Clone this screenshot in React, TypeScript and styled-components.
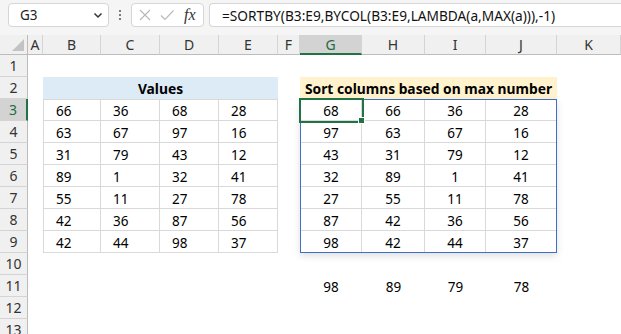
import styled, { createGlobalStyle } from "styled-components";

const GlobalStyle = createGlobalStyle`
  html, body {
    margin: 0;
    padding: 0;
    background: #ffffff;
    overflow: hidden;
  }
  body {
    font-family: "Noto Sans", "Open Sans", sans-serif;
    color: #000;
  }
`;

const Page = styled.div`
  width: 621px;
  height: 334px;
  overflow: hidden;
  background: #fff;
`;

/* ---------- formula bar ---------- */

const FormulaBar = styled.div`
  height: 35px;
  display: flex;
  align-items: flex-start;
  padding: 3px 0 0 8px;
  box-sizing: border-box;
  background: #f5f5f5;
`;

const Box = styled.div`
  height: 24px;
  box-sizing: border-box;
  background: #fff;
  border: 1px solid #d6d6d6;
  border-radius: 4px;
  display: flex;
  align-items: center;
`;

const NameBox = styled(Box)`
  width: 101px;
  justify-content: space-between;
  padding: 0 4px 0 11px;
  font-size: 13.5px;
  color: #222;
`;

const Dots = styled.div`
  width: 22px;
  height: 24px;
  display: flex;
  flex-direction: column;
  align-items: center;
  justify-content: center;
  gap: 2px;

  span {
    width: 2px;
    height: 2px;
    background: #555;
    border-radius: 1px;
  }
`;

const FxBox = styled(Box)`
  width: 73px;
  padding: 0 6px 0 5px;
  gap: 6px;
`;

const Fx = styled.span`
  font-family: "Liberation Serif", "DejaVu Serif", serif;
  font-style: italic;
  font-size: 16px;
  color: #333;
  margin-left: 3px;
`;

const FormulaInput = styled(Box)`
  flex: 1;
  margin-left: 5px;
  border-right: none;
  border-radius: 4px 0 0 4px;
  padding-left: 12px;
  font-size: 13.7px;
  color: #111;
  white-space: nowrap;
`;

/* ---------- sheet ---------- */

const Sheet = styled.div`
  display: grid;
  grid-template-columns: 28px 15px 58px 59px 59px 59px 22px 62px 63px 61px 71px 1fr;
  grid-template-rows: 20px repeat(13, 22px);
  font-size: 13.5px;
`;

const Corner = styled.div`
  background: #f0f0f0;
  border-right: 1px solid #bcbcbc;
  border-bottom: 1px solid #bcbcbc;
  position: relative;

  &::after {
    content: "";
    position: absolute;
    right: 3px;
    bottom: 3px;
    width: 0;
    height: 0;
    border-left: 12px solid transparent;
    border-bottom: 12px solid #c3c3c3;
  }
`;

const ColHead = styled.div<{ $active?: boolean }>`
  background: ${(p) => (p.$active ? "#d3d3d3" : "#f0f0f0")};
  border-right: 1px solid #d4d4d4;
  border-bottom: ${(p) => (p.$active ? "2px solid #217346" : "1px solid #bcbcbc")};
  display: flex;
  align-items: center;
  justify-content: center;
  font-size: 14px;
  color: ${(p) => (p.$active ? "#1d6b41" : "#333")};
`;

const RowHead = styled.div<{ $active?: boolean }>`
  background: ${(p) => (p.$active ? "#d3d3d3" : "#f0f0f0")};
  border-bottom: 1px solid #d4d4d4;
  border-right: ${(p) => (p.$active ? "2px solid #217346" : "1px solid #bcbcbc")};
  display: flex;
  align-items: center;
  justify-content: center;
  font-size: 14px;
  color: ${(p) => (p.$active ? "#1d6b41" : "#333")};
  grid-column: 1;
`;

const Table = styled.div<{ $col: string }>`
  grid-column: ${(p) => p.$col};
  grid-row: 3 / 11;
  display: grid;
  grid-template-columns: subgrid;
  grid-template-rows: subgrid;
`;

const TableTitle = styled.div<{ $fill: string }>`
  grid-column: 1 / -1;
  background: ${(p) => p.$fill};
  font-weight: 700;
  font-size: 13.8px;
  display: flex;
  align-items: center;
  justify-content: center;
  padding-top: 1px;
  white-space: nowrap;
`;

const Body = styled.div<{ $spill?: boolean }>`
  grid-column: 1 / -1;
  grid-row: 2 / -1;
  display: grid;
  grid-template-columns: subgrid;
  grid-template-rows: subgrid;
  border: 1px solid ${(p) => (p.$spill ? "#3f6fc6" : "#d9d9d9")};
  border-right: ${(p) => (p.$spill ? "1px solid #3f6fc6" : "none")};
  border-bottom: ${(p) => (p.$spill ? "1px solid #3f6fc6" : "none")};
  box-shadow: ${(p) => (p.$spill ? "0 3px 7px rgba(0,0,0,0.13)" : "none")};
`;

const Cell = styled.div<{ $center?: boolean; $noRight?: boolean; $noBottom?: boolean; $active?: boolean }>`
  display: flex;
  align-items: center;
  justify-content: ${(p) => (p.$center ? "center" : "flex-start")};
  padding: 2px 0 0 ${(p) => (p.$center ? "0" : "12px")};
  border-right: ${(p) => (p.$noRight ? "none" : "1px solid #d9d9d9")};
  border-bottom: ${(p) => (p.$noBottom ? "none" : "1px solid #d9d9d9")};
  position: relative;
  ${(p) =>
    p.$active &&
    `
    outline: 2px solid #217346;
    outline-offset: 0px;
    z-index: 2;
    &::after {
      content: "";
      position: absolute;
      right: -4px;
      bottom: -4px;
      width: 5px;
      height: 5px;
      background: #217346;
      border: 1px solid #fff;
    }
  `}
`;

const Total = styled.div<{ $col: number }>`
  grid-row: 12;
  grid-column: ${(p) => p.$col};
  display: flex;
  align-items: center;
  justify-content: center;
  padding-top: 2px;
`;

const columns = ["A", "B", "C", "D", "E", "F", "G", "H", "I", "J", "K"];

const values = [
  [66, 36, 68, 28],
  [63, 67, 97, 16],
  [31, 79, 43, 12],
  [89, 1, 32, 41],
  [55, 11, 27, 78],
  [42, 36, 87, 56],
  [42, 44, 98, 37],
];

const sorted = [
  [68, 66, 36, 28],
  [97, 63, 67, 16],
  [43, 31, 79, 12],
  [32, 89, 1, 41],
  [27, 55, 11, 78],
  [87, 42, 36, 56],
  [98, 42, 44, 37],
];

const totals = [98, 89, 79, 78];

const Chevron = () => (
  <svg width="12" height="12" viewBox="0 0 12 12">
    <path d="M2.5 4.5 L6 8 L9.5 4.5" fill="none" stroke="#333" strokeWidth="1.5" />
  </svg>
);

const Cross = () => (
  <svg width="16" height="16" viewBox="0 0 16 16">
    <path d="M3 3 L13 13 M13 3 L3 13" stroke="#b8b8b8" strokeWidth="1.1" fill="none" />
  </svg>
);

const Check = () => (
  <svg width="16" height="16" viewBox="0 0 16 16">
    <path d="M2 8.5 L6 12.5 L14.5 3.5" stroke="#b8b8b8" strokeWidth="1.1" fill="none" />
  </svg>
);

const App = () => {
  return (
    <Page>
      <GlobalStyle />
      <FormulaBar>
        <NameBox>
          G3
          <Chevron />
        </NameBox>
        <Dots>
          <span />
          <span />
          <span />
        </Dots>
        <FxBox>
          <Cross />
          <Check />
          <Fx>fx</Fx>
        </FxBox>
        <FormulaInput>=SORTBY(B3:E9,BYCOL(B3:E9,LAMBDA(a,MAX(a))),-1)</FormulaInput>
      </FormulaBar>

      <Sheet>
        <Corner />
        {columns.map((c) => (
          <ColHead key={c} $active={c === "G"}>
            {c}
          </ColHead>
        ))}
        {Array.from({ length: 13 }, (_, i) => (
          <RowHead key={i} $active={i === 2} style={{ gridRow: i + 2 }}>
            {i + 1}
          </RowHead>
        ))}

        <Table $col="3 / 7">
          <TableTitle $fill="#ddebf7">Values</TableTitle>
          <Body>
            {values.flatMap((row, r) =>
              row.map((v, c) => <Cell key={`${r}-${c}`}>{v}</Cell>)
            )}
          </Body>
        </Table>

        <Table $col="8 / 12">
          <TableTitle $fill="#fff2cc">Sort columns based on max number</TableTitle>
          <Body $spill>
            {sorted.flatMap((row, r) =>
              row.map((v, c) => (
                <Cell
                  key={`${r}-${c}`}
                  $center
                  $noRight={c === 3}
                  $noBottom={r === 6}
                  $active={r === 0 && c === 0}
                >
                  {v}
                </Cell>
              ))
            )}
          </Body>
        </Table>

        {totals.map((t, i) => (
          <Total key={i} $col={8 + i}>
            {t}
          </Total>
        ))}
      </Sheet>
    </Page>
  );
};

export default App;
